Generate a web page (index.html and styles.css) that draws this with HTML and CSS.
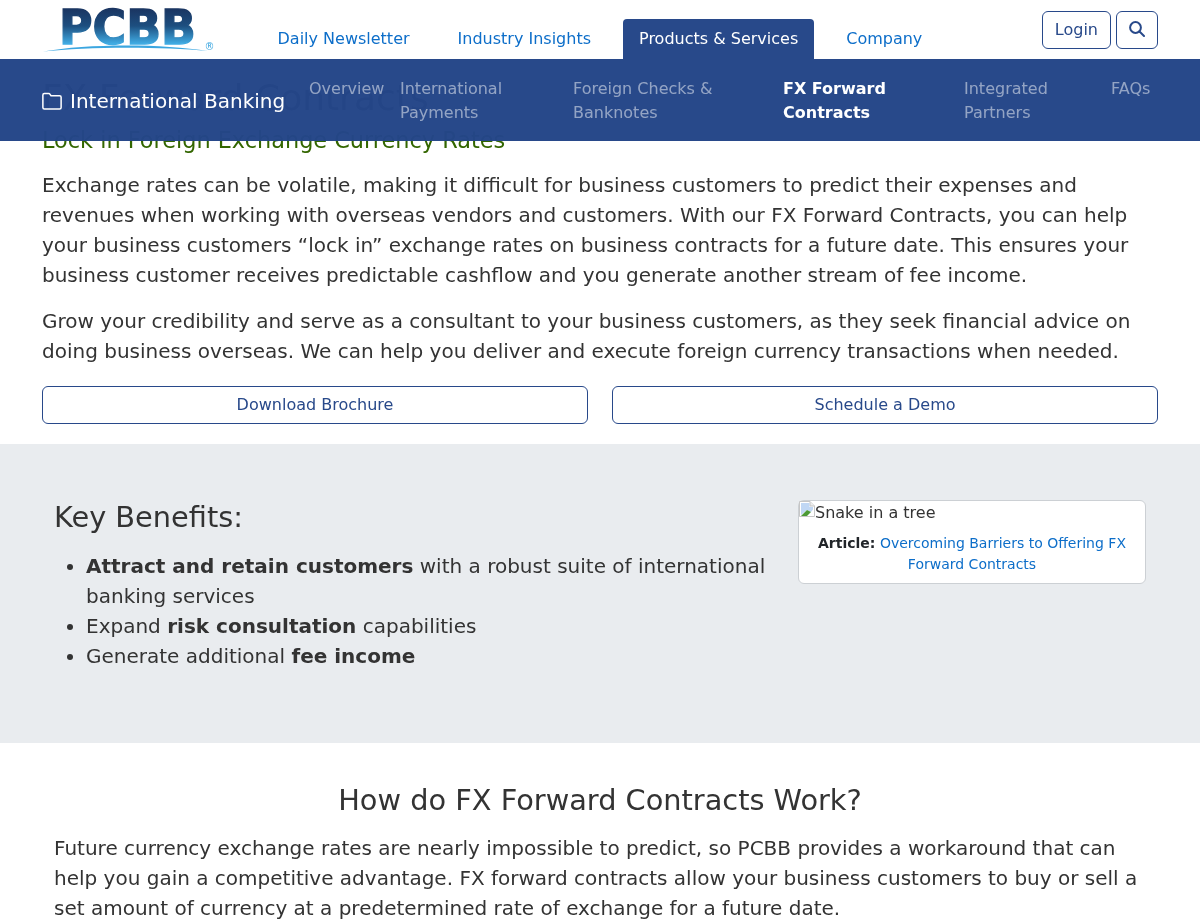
FILE: index.html
```html
<!DOCTYPE html>
<html lang="en">
<head>
<meta charset="utf-8">
<title>FX Forward Contracts</title>
<link rel="stylesheet" href="styles.css">
</head>
<body>
<header class="topbar">
  <a class="logo" href="#" aria-label="PCBB">
    <svg width="172" height="46" viewBox="0 0 172 46">
      <defs>
        <linearGradient id="lg" gradientUnits="userSpaceOnUse" x1="0" y1="2" x2="0" y2="38">
          <stop offset="0" stop-color="#1a3460"/>
          <stop offset="0.5" stop-color="#1d4f80"/>
          <stop offset="1" stop-color="#41ade5"/>
        </linearGradient>
      </defs>
      <text class="logo-text" x="17" y="38" textLength="137" lengthAdjust="spacingAndGlyphs" fill="url(#lg)" stroke="url(#lg)" stroke-width="1.400">PCBB</text>
      <path d="M1 45.500 C45 37.500 120 37.500 166 45 C120 40.500 45 40.500 1 45.500Z" fill="#3ba6e0"/>
      <text class="logo-r" x="162.500" y="44">®</text>
    </svg>
  </a>
  <nav class="mainnav">
    <a href="#">Daily Newsletter</a>
    <a href="#">Industry Insights</a>
    <a class="active" href="#">Products &amp; Services</a>
    <a href="#">Company</a>
  </nav>
  <div class="tools">
    <a class="tool" href="#">Login</a>
    <a class="tool tool-icon" href="#" aria-label="Search">
      <svg width="16" height="16" viewBox="0 0 16 16" fill="none" stroke="currentColor" stroke-width="2"><circle cx="6.500" cy="6.500" r="5.400"/><path d="M10.500 10.500 15 15" stroke-linecap="round"/></svg>
    </a>
  </div>
</header>

<div class="subnav">
  <a class="section" href="#">
    <svg width="20" height="20" viewBox="0 0 16 16" fill="none" stroke="currentColor" stroke-width="1.200"><path d="M.7 13.200V3.200c0-.7.500-1.200 1.200-1.200h3.500c.4 0 .7.200.9.500l.9 1.300h6.900c.7 0 1.200.5 1.200 1.200v8.200c0 .7-.5 1.200-1.200 1.200H1.900c-.7 0-1.200-.5-1.200-1.200Z" stroke-linejoin="round"/></svg>
    <span>International Banking</span>
  </a>
  <nav class="sublinks">
    <a href="#">Overview</a>
    <a href="#">International Payments</a>
    <a href="#">Foreign Checks &amp; Banknotes</a>
    <a class="current" href="#">FX Forward Contracts</a>
    <a href="#">Integrated Partners</a>
    <a href="#">FAQs</a>
  </nav>
</div>

<main>
  <section class="intro">
    <h1>FX Forward Contracts</h1>
    <h2>Lock in Foreign Exchange Currency Rates</h2>
    <p>Exchange rates can be volatile, making it difficult for business customers to predict their expenses and revenues when working with overseas vendors and customers. With our FX Forward Contracts, you can help your business customers “lock in” exchange rates on business contracts for a future date. This ensures your business customer receives predictable cashflow and you generate another stream of fee income.</p>
    <p>Grow your credibility and serve as a consultant to your business customers, as they seek financial advice on doing business overseas. We can help you deliver and execute foreign currency transactions when needed.</p>
    <div class="actions">
      <a class="btn" href="#">Download Brochure</a>
      <a class="btn" href="#">Schedule a Demo</a>
    </div>
  </section>

  <section class="benefits">
    <div class="benefit-text">
      <h3>Key Benefits:</h3>
      <ul>
        <li><strong>Attract and retain customers</strong> with a robust suite of international banking services</li>
        <li>Expand <strong>risk consultation</strong> capabilities</li>
        <li>Generate additional <strong>fee income</strong></li>
      </ul>
    </div>
    <aside class="card">
      <div class="broken">
        <svg class="broken-icon" width="16" height="16" viewBox="0 0 16 16">
          <path d="M.5.500H11L15.500 5V15.500H.5Z" fill="#fff" stroke="#c6c6c6"/>
          <path d="M11 .5V5H15.500" fill="#ececec" stroke="#c6c6c6"/>
          <path d="M2 2H10.500V6H14V8.500L12 11 8 9 2 14Z" fill="#c0d7f4"/>
          <path d="M2 15L8 9 12 11 8 15Z" fill="#4c9a36"/>
        </svg><span>Snake in a tree</span>
      </div>
      <p class="caption"><strong>Article:</strong> <a href="#">Overcoming Barriers to Offering FX Forward Contracts</a></p>
    </aside>
  </section>

  <section class="how">
    <h3>How do FX Forward Contracts Work?</h3>
    <p>Future currency exchange rates are nearly impossible to predict, so PCBB provides a workaround that can help you gain a competitive advantage. FX forward contracts allow your business customers to buy or sell a set amount of currency at a predetermined rate of exchange for a future date.</p>
  </section>
</main>
</body>
</html>
```
FILE: styles.css
```css
* { box-sizing: border-box; }
html, body { height: 920px; overflow: hidden; }
body {
  margin: 0;
  font-family: Verdana, "DejaVu Sans", sans-serif;
  font-size: 20px;
  line-height: 30px;
  color: #333;
  background: #fff;
  position: relative;
}
a { text-decoration: none; }
.topbar, .subnav, main { will-change: transform; }

.topbar {
  height: 59px;
  display: flex;
  align-items: flex-start;
  padding: 0 42px;
}
.logo { display: block; width: 172px; height: 46px; margin-top: 6px; flex: none; }
.logo-text { font-family: "DejaVu Sans", sans-serif; font-weight: 700; font-size: 48px; }
.logo-r { font-family: "DejaVu Sans", sans-serif; font-size: 10px; fill: #3ba6e0; }

.mainnav {
  display: flex;
  gap: 16px;
  margin-left: 47.500px;
  padding-top: 19px;
  font-size: 16px;
  line-height: 24px;
}
.mainnav a {
  display: block;
  height: 40px;
  padding: 8px 16px;
  color: #0d6ec9;
  border-radius: 4px 4px 0 0;
}
.mainnav a.active { background: #28498a; color: #fff; }

.tools { margin-left: auto; display: flex; gap: 5px; padding-top: 11px; }
.tool {
  display: flex;
  align-items: center;
  justify-content: center;
  height: 38px;
  padding: 0 12px;
  font-size: 16px;
  line-height: 24px;
  color: #28498a;
  border: 1px solid #28498a;
  border-radius: 6px;
}
.tool-icon { width: 42px; padding: 0 0 2px; }

.subnav {
  position: absolute;
  z-index: 1;
  left: 0;
  top: 59px;
  width: 1200px;
  height: 82px;
  background: rgba(36, 69, 136, 0.98);
  display: flex;
  padding: 0 42px;
  color: #fff;
}
.section {
  display: flex;
  align-items: center;
  gap: 8px;
  height: 84px;
  color: #fff;
  font-size: 20px;
  white-space: nowrap;
  width: 267px;
  flex: none;
}
.section svg { flex: none; }
.sublinks {
  display: grid;
  grid-template-columns: 75px 157px 194px 165px 131px 39px;
  column-gap: 16px;
  padding-top: 18px;
  font-size: 16px;
  line-height: 24px;
}
.sublinks a { color: rgba(255, 255, 255, 0.5); }
.sublinks a.current { color: #fff; font-weight: 700; }

.intro { padding: 0 42px; height: 385px; }
h1 {
  margin: 0;
  padding-top: 17px;
  font-size: 36px;
  line-height: 44px;
  font-weight: 400;
  color: #333;
  white-space: nowrap;
}
h2 {
  margin: 7px 0 16px;
  font-size: 22.400px;
  line-height: 27px;
  font-weight: 400;
  color: #336600;
}
.intro p { margin: 0 0 16px; }
.actions {
  display: grid;
  grid-template-columns: 1fr 1fr;
  gap: 24px;
  margin-top: 20px;
}
.btn {
  display: block;
  height: 38px;
  text-align: center;
  font-size: 16px;
  line-height: 36px;
  color: #28498a;
  border: 1px solid #28498a;
  border-radius: 6px;
}

.benefits {
  height: 299px;
  background: #e9ecef;
  padding: 56px 54px 0;
  display: flex;
  justify-content: space-between;
  align-items: flex-start;
}
.benefit-text { width: 720px; }
h3 { margin: 0; font-size: 28.800px; line-height: 35px; font-weight: 400; color: #333; }
.benefits ul { margin: 16px 0 0; padding-left: 32px; }
.card {
  width: 348px;
  height: 84px;
  background: #fff;
  border: 1px solid #ccd0d4;
  border-radius: 6px;
  font-size: 16px;
  line-height: 24px;
}
.broken { display: flex; color: #333; height: 24px; }
.broken-icon { flex: none; }
.caption {
  margin: 8px 16px 0;
  font-size: 14px;
  line-height: 21px;
  text-align: center;
  color: #212529;
}
.caption a { color: #0d6ec9; }

.how { padding: 40px 54px 0; }
.how h3 { text-align: center; margin-bottom: 15px; }
.how p { margin: 0; }
```
